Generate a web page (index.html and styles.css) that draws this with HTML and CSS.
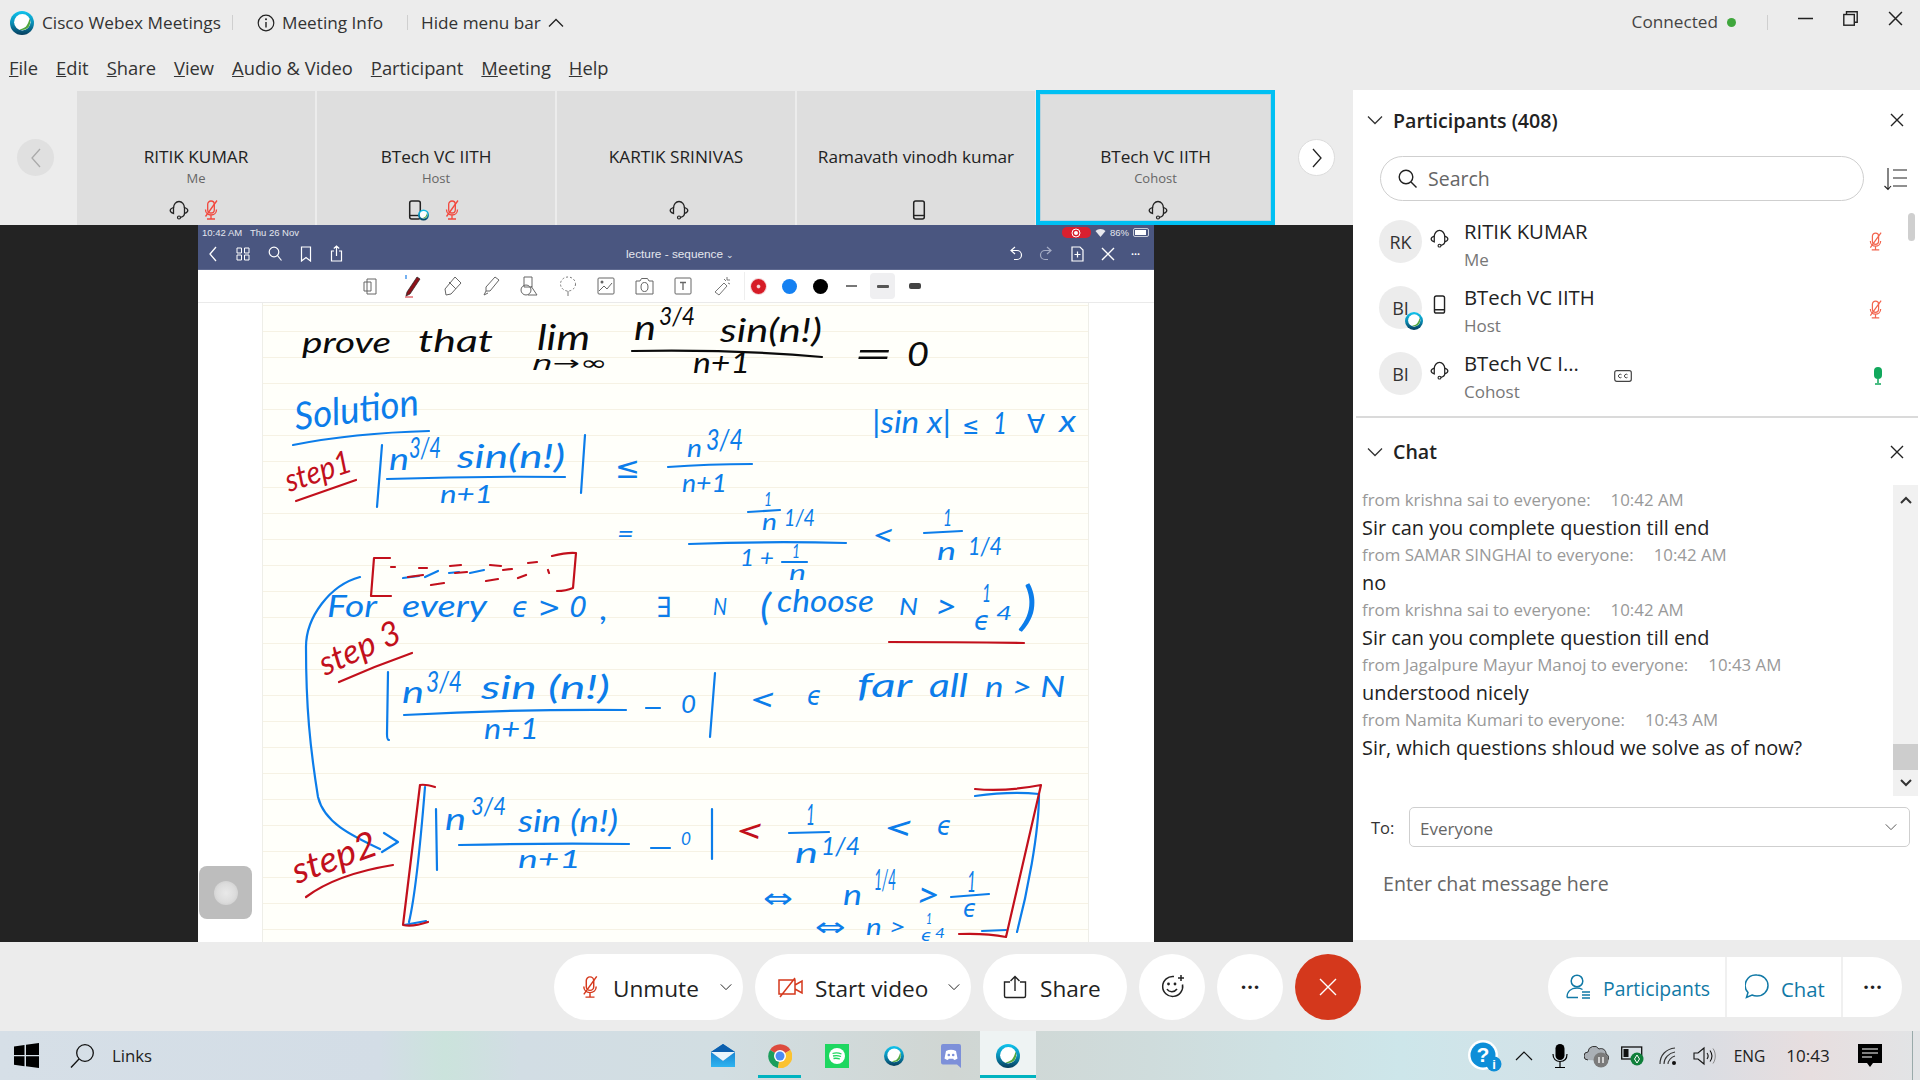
FILE: index.html
```html
<!DOCTYPE html>
<html lang="en">
<head>
<meta charset="utf-8">
<title>Cisco Webex Meetings</title>
<link rel="stylesheet" href="styles.css">
</head>
<body>
<svg class="defs" width="0" height="0" aria-hidden="true">
  <defs>
    <linearGradient id="wxg" x1="0" y1="0" x2="0" y2="1"><stop offset="0" stop-color="#10c4ee"/><stop offset=".5" stop-color="#0a8fb6"/><stop offset="1" stop-color="#053c5c"/></linearGradient>
    <linearGradient id="mailg" x1="0" y1="0" x2="0" y2="1"><stop offset="0" stop-color="#0f6fc4"/><stop offset="1" stop-color="#2fb4f0"/></linearGradient>
    <symbol id="wx" viewBox="0 0 24 24">
      <circle cx="12" cy="12" r="12" fill="url(#wxg)"/>
      <circle cx="12.300" cy="11.300" r="8.200" fill="#fff"/>
      <path d="M19.500 7.500c1.400 3.500.6 7.400-1.900 9.600-2.300 2.100-5.500 2.500-8.200 1.300 3.900-.6 6.200-1.800 7.600-4.300 1-1.700 1.900-3.900 2.500-6.600z" fill="#52a73f"/>
    </symbol>
    <symbol id="headset" viewBox="0 0 20 20">
      <path d="M4.500 8a5.500 6.500 0 0 1 11 0M15.500 13.500c0 2-1.500 3.200-4 3.800" fill="none" stroke="currentColor" stroke-width="1.300"/>
      <path d="M4.500 7.500v6c-2-.7-3.300-1.800-3.300-3s1.300-2.300 3.300-3zM15.500 7.500v6c2-.7 3.300-1.800 3.300-3s-1.300-2.300-3.300-3z" fill="none" stroke="currentColor" stroke-width="1.300"/>
      <circle cx="10" cy="17.500" r="1.500" fill="none" stroke="currentColor" stroke-width="1.200"/>
    </symbol>
    <symbol id="phone" viewBox="0 0 14 20">
      <rect x="1.700" y="1" width="10.600" height="18" rx="2" fill="none" stroke="currentColor" stroke-width="1.500"/>
      <path d="M2 15.500h10" stroke="currentColor" stroke-width="1.400"/>
    </symbol>
    <symbol id="micoff" viewBox="0 0 16 20">
      <rect x="4.700" y="1" width="6.600" height="12" rx="3.300" fill="none" stroke="currentColor" stroke-width="1.300"/>
      <path d="M2.500 9.500c0 3.500 2.500 5.500 5.500 5.500s5.500-2 5.500-5.500M8 15v3.500M4 19h8M14 .5L2.500 16.500" fill="none" stroke="currentColor" stroke-width="1.300"/>
    </symbol>
    <symbol id="x" viewBox="0 0 14 14"><path d="M1 1l12 12M13 1L1 13" fill="none" stroke="currentColor" stroke-width="1.400"/></symbol>
    <symbol id="chev" viewBox="0 0 16 10"><path d="M1 1.500l7 7 7-7" fill="none" stroke="currentColor" stroke-width="1.300"/></symbol>
  </defs>
</svg>

<div class="app">
  <header class="titlebar">
    <svg class="logo" width="24" height="24"><use href="#wx"/></svg>
    <span class="app-name">Cisco Webex Meetings</span>
    <span class="tsep s1"></span>
    <svg class="info" width="18" height="18" viewBox="0 0 18 18"><circle cx="9" cy="9" r="7.800" fill="none" stroke="#222" stroke-width="1.200"/><path d="M9 8v5.500" stroke="#222" stroke-width="1.400"/><circle cx="9" cy="5.300" r="1" fill="#222"/></svg>
    <span class="tb-text">Meeting Info</span>
    <span class="tsep s2"></span>
    <span class="tb-text">Hide menu bar</span>
    <svg class="hide-chev" width="16" height="10" viewBox="0 0 16 10"><path d="M1 8.500l7-7 7 7" fill="none" stroke="#222" stroke-width="1.300"/></svg>
    <div class="winctl">
      <span class="connected">Connected</span>
      <span class="cdot"></span>
      <span class="tsep s3"></span>
      <svg class="wbtn" width="15" height="15" viewBox="0 0 15 15"><path d="M0 7.500h15" stroke="#222" stroke-width="1.500"/></svg>
      <svg class="wbtn" width="15" height="15" viewBox="0 0 15 15"><rect x=".8" y="3.500" width="10.500" height="10.700" fill="none" stroke="#222" stroke-width="1.400"/><path d="M3.500 3.500V.8h10.700v10.500h-2.900" fill="none" stroke="#222" stroke-width="1.400"/></svg>
      <svg class="wbtn" width="15" height="15"><use href="#x" class="ink-dark"/></svg>
    </div>
  </header>

  <nav class="menubar">
    <span><u>F</u>ile</span><span><u>E</u>dit</span><span><u>S</u>hare</span><span><u>V</u>iew</span><span><u>A</u>udio &amp; Video</span><span><u>P</u>articipant</span><span><u>M</u>eeting</span><span><u>H</u>elp</span>
  </nav>

  <div class="workspace">
    <main class="stage">
      <div class="strip">
        <button class="nav prev"><svg width="12" height="20" viewBox="0 0 12 20"><path d="M10 1L2 10l8 9" fill="none" stroke="#aaa" stroke-width="1.300"/></svg></button>
        <div class="tiles">
          <div class="tile">
            <div class="t-name">RITIK KUMAR</div><div class="t-role">Me</div>
            <div class="t-icons two"><svg class="ic-dark" width="20" height="20"><use href="#headset"/></svg><svg class="ic-red" width="16" height="20"><use href="#micoff"/></svg></div>
          </div>
          <div class="tile">
            <div class="t-name">BTech VC IITH</div><div class="t-role">Host</div>
            <div class="t-icons two"><span class="dev"><svg class="ic-dark" width="14" height="20"><use href="#phone"/></svg><svg class="dev-logo" width="11" height="12"><use href="#wx"/></svg></span><svg class="ic-red" width="16" height="20"><use href="#micoff"/></svg></div>
          </div>
          <div class="tile">
            <div class="t-name">KARTIK SRINIVAS</div><div class="t-role"></div>
            <div class="t-icons one"><svg class="ic-dark" width="20" height="20"><use href="#headset"/></svg></div>
          </div>
          <div class="tile">
            <div class="t-name">Ramavath vinodh kumar</div><div class="t-role"></div>
            <div class="t-icons one"><svg class="ic-dark" width="14" height="20"><use href="#phone"/></svg></div>
          </div>
          <div class="tile sel">
            <div class="t-name">BTech VC IITH</div><div class="t-role">Cohost</div>
            <div class="t-icons one"><svg class="ic-dark" width="20" height="20"><use href="#headset"/></svg></div>
          </div>
        </div>
        <button class="nav next"><svg width="12" height="20" viewBox="0 0 12 20"><path d="M2 1l8 9-8 9" fill="none" stroke="#222" stroke-width="1.300"/></svg></button>
      </div>

      <div class="share">
        <div class="slide">
          <div class="statusbar">
            <span>10:42 AM&nbsp;&nbsp; Thu 26 Nov</span>
            <div class="status-r">
              <span class="rec"><svg width="10" height="10" viewBox="0 0 10 10"><circle cx="5" cy="5" r="4" fill="none" stroke="#fff"/><circle cx="5" cy="5" r="2" fill="#fff"/></svg></span>
              <svg width="11" height="9" viewBox="0 0 11 9"><path d="M.5 3a7 7 0 0 1 10 0L5.500 9z" fill="#e8e8ee"/></svg>
              <span>86%</span>
              <span class="batt"><span></span></span>
            </div>
          </div>
          <div class="nbbar">
            <div class="nb-left">
              <svg width="10" height="16" viewBox="0 0 10 16"><path d="M8 1L2 8l6 7" fill="none" stroke="#fff" stroke-width="1.300"/></svg>
              <svg width="14" height="14" viewBox="0 0 14 14"><path d="M1 1h4.500v5H1zM8.500 1H13v5H8.500zM1 8h4.500v5H1zM8.500 8H13v5H8.500z" fill="none" stroke="#fff"/></svg>
              <svg width="14" height="15" viewBox="0 0 14 15"><circle cx="6" cy="6" r="4.800" fill="none" stroke="#fff" stroke-width="1.200"/><path d="M9.500 9.500l4 5" stroke="#fff" stroke-width="1.200"/></svg>
              <svg width="12" height="16" viewBox="0 0 12 16"><path d="M1.500 1h9v14L6 11.500 1.500 15z" fill="none" stroke="#fff" stroke-width="1.200"/></svg>
              <svg width="13" height="17" viewBox="0 0 13 17"><path d="M4 6H1.500v10h10V6H9M6.500 11V1M3.800 3.500L6.500 1l2.700 2.500" fill="none" stroke="#fff" stroke-width="1.200"/></svg>
            </div>
            <div class="nb-title">lecture - sequence <span class="nb-caret">⌄</span></div>
            <div class="nb-right">
              <svg width="15" height="15" viewBox="0 0 15 15"><path d="M7 1L3 4.500 7 8M3 4.500h6a4.500 4.500 0 0 1 0 9H6" fill="none" stroke="#fff" stroke-width="1.200"/></svg>
              <svg width="15" height="15" viewBox="0 0 15 15"><path d="M8 1l4 3.500L8 8M12 4.500H6a4.500 4.500 0 0 0 0 9h3" fill="none" stroke="#a5acc4" stroke-width="1.200"/></svg>
              <svg width="15" height="16" viewBox="0 0 15 16"><path d="M2 1h8l3 3v11H2zM7.500 5.500v6M4.500 8.500h6" fill="none" stroke="#fff" stroke-width="1.200"/></svg>
              <svg width="14" height="14"><use href="#x" class="ink-white"/></svg>
              <span class="nb-dots">•••</span>
            </div>
          </div>
          <div class="tools">
            <svg class="tool t1" width="16" height="17" viewBox="0 0 16 17"><path d="M4 1h9v15H4zM1 4h7v9H1z" fill="none" stroke="#666"/></svg>
            <svg class="tool t2" width="20" height="24" viewBox="0 0 20 24"><path d="M14 3l3 2L7 20l-4 2 1-4z" fill="#8d1119" stroke="#222" stroke-width=".7"/><path d="M2 23h8" stroke="#d6242f"/><path d="M3 1v4" stroke="#1b7fe8" stroke-width="1.200"/></svg>
            <svg class="tool t3" width="20" height="22" viewBox="0 0 20 22"><path d="M12 2l6 6L8 19l-5 1-1-6zM6 7l7 7" fill="none" stroke="#666"/></svg>
            <svg class="tool t4" width="20" height="22" viewBox="0 0 20 22"><path d="M14 2l4 3-9 11H5v-4zM5 16l-2 4 4-2" fill="none" stroke="#666"/></svg>
            <svg class="tool t5" width="20" height="22" viewBox="0 0 20 22"><path d="M5 2h8v10H5z" fill="none" stroke="#666"/><circle cx="7" cy="15" r="5" fill="none" stroke="#666"/><path d="M12 11l6 9h-9" fill="none" stroke="#666"/></svg>
            <svg class="tool t6" width="18" height="22" viewBox="0 0 18 22"><ellipse cx="9" cy="9" rx="7.500" ry="7" fill="none" stroke="#777" stroke-dasharray="2 2"/><path d="M9 16v5" stroke="#777"/></svg>
            <svg class="tool t7" width="18" height="18" viewBox="0 0 18 18"><rect x="1" y="1" width="16" height="16" rx="1" fill="none" stroke="#666"/><path d="M2 14l5-5 3 3 5-6" fill="none" stroke="#666"/><circle cx="5" cy="5" r="1.500" fill="#666"/></svg>
            <svg class="tool t8" width="19" height="18" viewBox="0 0 19 18"><path d="M1 4h4l1.500-2.500h6L14 4h4v13H1z" fill="none" stroke="#666"/><ellipse cx="9.500" cy="10" rx="3.500" ry="4.500" fill="none" stroke="#666"/></svg>
            <svg class="tool t9" width="18" height="18" viewBox="0 0 18 18"><rect x="1" y="1" width="16" height="16" rx="1" fill="none" stroke="#666"/><path d="M6 5.500h6M9 5.500v7.500" stroke="#666" stroke-width="1.300"/></svg>
            <svg class="tool t10" width="20" height="22" viewBox="0 0 20 22"><path d="M12 8l3 3-8 9-4-3zM15 2v3M18 5h-3M12 4l2 2M18 9l-2-1" fill="none" stroke="#777"/></svg>
            <span class="tsplit"></span>
            <span class="pen red"></span><span class="pen blue"></span><span class="pen black"></span>
            <span class="wt w1"></span><span class="wt-sel"><span class="wt w2"></span></span><span class="wt w3"></span>
          </div>
          <div class="paper"></div>
          <svg class="ink" width="956" height="639" viewBox="198 303 956 639">
            <!-- black -->
            <g class="hw k">
              <text x="302" y="353" font-size="28" textLength="89" lengthAdjust="spacingAndGlyphs">prove</text>
              <text x="418" y="352" font-size="30" textLength="75" lengthAdjust="spacingAndGlyphs">that</text>
              <text x="537" y="350" font-size="34" textLength="53" lengthAdjust="spacingAndGlyphs">lim</text>
              <text class="sym" x="532" y="370" font-size="20" textLength="75" lengthAdjust="spacingAndGlyphs">n→∞</text>
              <text x="634" y="340" font-size="34" textLength="22" lengthAdjust="spacingAndGlyphs">n</text>
              <text x="659" y="325" font-size="26" textLength="36" lengthAdjust="spacingAndGlyphs">3/4</text>
              <text x="720" y="342" font-size="32" textLength="102" lengthAdjust="spacingAndGlyphs">sin(n!)</text>
              <text x="693" y="373" font-size="28" textLength="57" lengthAdjust="spacingAndGlyphs">n+1</text>
              <text x="854" y="368" font-size="38" textLength="39" lengthAdjust="spacingAndGlyphs">=</text>
              <text x="907" y="366" font-size="32" textLength="22" lengthAdjust="spacingAndGlyphs">0</text>
            </g>
            <path class="st k" d="M632 351q100-2 190 6"/>
            <!-- blue writing -->
            <g class="hw b">
              <text x="296" y="430" font-size="38" textLength="125" lengthAdjust="spacingAndGlyphs" transform="rotate(-7 296 430)">Solution</text>
              <text x="389" y="470" font-size="30" textLength="20" lengthAdjust="spacingAndGlyphs">n</text>
              <text x="409" y="458" font-size="28" textLength="32" lengthAdjust="spacingAndGlyphs">3/4</text>
              <text x="457" y="468" font-size="32" textLength="108" lengthAdjust="spacingAndGlyphs">sin(n!)</text>
              <text x="440" y="503" font-size="26" textLength="53" lengthAdjust="spacingAndGlyphs">n+1</text>
              <text class="sym" x="615" y="478" font-size="30" textLength="25" lengthAdjust="spacingAndGlyphs">≤</text>
              <text x="687" y="457" font-size="26" textLength="15" lengthAdjust="spacingAndGlyphs">n</text>
              <text x="706" y="450" font-size="28" textLength="37" lengthAdjust="spacingAndGlyphs">3/4</text>
              <text x="682" y="492" font-size="26" textLength="45" lengthAdjust="spacingAndGlyphs">n+1</text>
              <text x="872" y="433" font-size="30" textLength="79" lengthAdjust="spacingAndGlyphs">|sin x|</text>
              <text class="sym" x="962" y="434" font-size="24" textLength="17" lengthAdjust="spacingAndGlyphs">≤</text>
              <text x="993" y="434" font-size="30" textLength="14" lengthAdjust="spacingAndGlyphs">1</text>
              <text class="sym" x="1027" y="433" font-size="26" textLength="18" lengthAdjust="spacingAndGlyphs">∀</text>
              <text x="1059" y="432" font-size="30" textLength="17" lengthAdjust="spacingAndGlyphs">x</text>
              <text x="764" y="506" font-size="20" textLength="8" lengthAdjust="spacingAndGlyphs">1</text>
              <text x="762" y="530" font-size="24" textLength="15" lengthAdjust="spacingAndGlyphs">n</text>
              <text x="784" y="526" font-size="24" textLength="31" lengthAdjust="spacingAndGlyphs">1/4</text>
              <text x="617" y="543" font-size="26" textLength="17" lengthAdjust="spacingAndGlyphs">=</text>
              <text x="740" y="566" font-size="24" textLength="34" lengthAdjust="spacingAndGlyphs">1 +</text>
              <text x="792" y="558" font-size="20" textLength="8" lengthAdjust="spacingAndGlyphs">1</text>
              <text x="789" y="580" font-size="22" textLength="17" lengthAdjust="spacingAndGlyphs">n</text>
              <text x="872" y="546" font-size="30" textLength="23" lengthAdjust="spacingAndGlyphs">&lt;</text>
              <text x="943" y="526" font-size="24" textLength="9" lengthAdjust="spacingAndGlyphs">1</text>
              <text x="937" y="560" font-size="26" textLength="19" lengthAdjust="spacingAndGlyphs">n</text>
              <text x="968" y="555" font-size="26" textLength="34" lengthAdjust="spacingAndGlyphs">1/4</text>

              <text x="327" y="617" font-size="30" textLength="50" lengthAdjust="spacingAndGlyphs">For</text>
              <text x="402" y="617" font-size="30" textLength="85" lengthAdjust="spacingAndGlyphs">every</text>
              <text class="sym" x="512" y="617" font-size="28" textLength="75" lengthAdjust="spacingAndGlyphs">ϵ &gt; 0</text>
              <text x="600" y="620" font-size="30" textLength="8" lengthAdjust="spacingAndGlyphs">,</text>
              <text class="sym" x="656" y="617" font-size="28" textLength="15" lengthAdjust="spacingAndGlyphs">∃</text>
              <text x="713" y="615" font-size="24" textLength="14" lengthAdjust="spacingAndGlyphs">N</text>
              <text x="760" y="620" font-size="36" textLength="11" lengthAdjust="spacingAndGlyphs">(</text>
              <text x="777" y="612" font-size="30" textLength="97" lengthAdjust="spacingAndGlyphs">choose</text>
              <text x="899" y="615" font-size="24" textLength="19" lengthAdjust="spacingAndGlyphs">N</text>
              <text x="935" y="618" font-size="32" textLength="22" lengthAdjust="spacingAndGlyphs">&gt;</text>
              <text x="982" y="602" font-size="26" textLength="9" lengthAdjust="spacingAndGlyphs">1</text>
              <text class="sym" x="974" y="630" font-size="26" textLength="16" lengthAdjust="spacingAndGlyphs">ϵ</text>
              <text x="996" y="620" font-size="20" textLength="16" lengthAdjust="spacingAndGlyphs">4</text>
              <text x="1020" y="624" font-size="52" textLength="17" lengthAdjust="spacingAndGlyphs">)</text>

              <text x="402" y="703" font-size="30" textLength="22" lengthAdjust="spacingAndGlyphs">n</text>
              <text x="426" y="692" font-size="28" textLength="36" lengthAdjust="spacingAndGlyphs">3/4</text>
              <text x="481" y="699" font-size="32" textLength="129" lengthAdjust="spacingAndGlyphs">sin (n!)</text>
              <text x="484" y="739" font-size="28" textLength="55" lengthAdjust="spacingAndGlyphs">n+1</text>
              <text x="681" y="713" font-size="26" textLength="15" lengthAdjust="spacingAndGlyphs">0</text>
              <text x="749" y="711" font-size="32" textLength="28" lengthAdjust="spacingAndGlyphs">&lt;</text>
              <text class="sym" x="807" y="705" font-size="26" textLength="15" lengthAdjust="spacingAndGlyphs">ϵ</text>
              <text x="857" y="697" font-size="32" textLength="55" lengthAdjust="spacingAndGlyphs">far</text>
              <text x="929" y="697" font-size="32" textLength="39" lengthAdjust="spacingAndGlyphs">all</text>
              <text x="985" y="697" font-size="28" textLength="80" lengthAdjust="spacingAndGlyphs">n &gt; N</text>

              <text x="445" y="830" font-size="30" textLength="21" lengthAdjust="spacingAndGlyphs">n</text>
              <text x="471" y="815" font-size="26" textLength="35" lengthAdjust="spacingAndGlyphs">3/4</text>
              <text x="518" y="832" font-size="30" textLength="100" lengthAdjust="spacingAndGlyphs">sin (n!)</text>
              <text x="518" y="868" font-size="26" textLength="63" lengthAdjust="spacingAndGlyphs">n+1</text>
              <text x="681" y="845" font-size="18" textLength="10" lengthAdjust="spacingAndGlyphs">0</text>
              <text x="806" y="825" font-size="28" textLength="9" lengthAdjust="spacingAndGlyphs">1</text>
              <text x="795" y="863" font-size="28" textLength="23" lengthAdjust="spacingAndGlyphs">n</text>
              <text x="821" y="855" font-size="26" textLength="39" lengthAdjust="spacingAndGlyphs">1/4</text>
              <text x="883" y="840" font-size="34" textLength="32" lengthAdjust="spacingAndGlyphs">&lt;</text>
              <text class="sym" x="937" y="835" font-size="26" textLength="15" lengthAdjust="spacingAndGlyphs">ϵ</text>
              <text class="sym" x="763" y="908" font-size="28" textLength="30" lengthAdjust="spacingAndGlyphs">⇔</text>
              <text x="843" y="905" font-size="28" textLength="19" lengthAdjust="spacingAndGlyphs">n</text>
              <text x="874" y="890" font-size="28" textLength="22" lengthAdjust="spacingAndGlyphs">1/4</text>
              <text x="916" y="907" font-size="34" textLength="24" lengthAdjust="spacingAndGlyphs">&gt;</text>
              <text x="967" y="892" font-size="28" textLength="9" lengthAdjust="spacingAndGlyphs">1</text>
              <text class="sym" x="963" y="917" font-size="24" textLength="14" lengthAdjust="spacingAndGlyphs">ϵ</text>
              <text class="sym" x="815" y="936" font-size="26" textLength="31" lengthAdjust="spacingAndGlyphs">⇔</text>
              <text x="866" y="935" font-size="24" textLength="40" lengthAdjust="spacingAndGlyphs">n &gt;</text>
              <text x="926" y="924" font-size="16" textLength="6" lengthAdjust="spacingAndGlyphs">1</text>
              <text class="sym" x="921" y="941" font-size="16" textLength="11" lengthAdjust="spacingAndGlyphs">ϵ</text>
              <text x="935" y="938" font-size="14" textLength="10" lengthAdjust="spacingAndGlyphs">4</text>
            </g>
            <g class="st b">
              <path d="M293 445q60-12 136-14"/>
              <path d="M382 445l-5 62M585 435l-4 58"/>
              <path d="M387 479q90-3 178-2"/>
              <path d="M668 467q40-3 84-3"/>
              <path d="M748 512l32-2M689 544q80-3 157-1M782 562h25M924 533l38-2"/>
              <path d="M360 577c-30 8-54 40-54 70 0 60 4 100 12 150 6 25 32 38 62 52M384 833l14 9-16 10"/>
              <path d="M388 672l-1 62q0 6 2 6M404 715q110-6 222-5M646 708h14M715 673l-5 64"/>
              <path d="M436 809l1 61M459 845q85-2 170-1M651 848h19M712 809v50M789 833l40-1M951 897l38-3"/>
              <path d="M425 787c-4 50-10 110-16 135M404 925l22-4M975 796q36-5 64-2c0 40-12 100-22 138M1006 930l-24 1"/>
              <path d="M403 578l16-2M425 577l13-6M449 573l10-1M470 573l14-3"/>
            </g>
            <!-- red -->
            <g class="hw r">
              <text x="289" y="492" font-size="32" textLength="68" lengthAdjust="spacingAndGlyphs" transform="rotate(-18 289 492)">step1</text>
              <text x="325" y="676" font-size="34" textLength="86" lengthAdjust="spacingAndGlyphs" transform="rotate(-24 325 676)">step 3</text>
              <text x="297" y="884" font-size="36" textLength="88" lengthAdjust="spacingAndGlyphs" transform="rotate(-20 297 884)">step2</text>
              <text x="735" y="843" font-size="34" textLength="30" lengthAdjust="spacingAndGlyphs">&lt;</text>
            </g>
            <g class="st r">
              <path d="M296 501l60-21"/>
              <path d="M339 682q36-16 73-29"/>
              <path d="M306 897c20-15 50-26 87-32"/>
              <path d="M889 642q70 0 135 1"/>
              <path d="M390 558h-16l-3 38h20M552 556q16-4 24-3l-3 35q-7 3-16 3"/>
              <path d="M435 787q-10-3-15-2l-17 140q10 2 25-3"/>
              <path d="M975 789q30 3 66-4l-35 152q-20-4-47-3"/>
              <path d="M391 567h4M408 577l15-2M419 568h8M431 585l13-2M450 566l11-1M455 573l12-1M486 581l12-2M490 565l11 1M503 570l9-1M518 578l8-3M528 563l9-1M548 570l1 3"/>
            </g>
          </svg>
          <div class="floater"><span></span></div>
        </div>
      </div>
    </main>

    <aside class="side">
      <section class="people">
        <div class="p-head">
          <svg class="coll" width="16" height="10"><use href="#chev"/></svg>
          <h2>Participants (408)</h2>
          <svg class="close" width="14" height="14"><use href="#x"/></svg>
        </div>
        <div class="search-row">
          <div class="search">
            <svg width="19" height="19" viewBox="0 0 19 19"><circle cx="8" cy="8" r="6.800" fill="none" stroke="#222" stroke-width="1.400"/><path d="M13 13l5.500 5.500" stroke="#222" stroke-width="1.400"/></svg>
            <span>Search</span>
          </div>
          <svg class="sort" width="25" height="24" viewBox="0 0 25 24"><path d="M5 1v21M1.500 19L5 22.500 8 19M10 3h14M10 11h14M10 19h14" fill="none" stroke="#222" stroke-width="1.100"/></svg>
        </div>
        <div class="row">
          <div class="avatar">RK</div>
          <svg class="r-ic" width="19" height="19"><use href="#headset"/></svg>
          <div class="r-txt"><div class="r-name">RITIK KUMAR</div><div class="r-role">Me</div></div>
          <svg class="r-mic" width="15" height="19"><use href="#micoff"/></svg>
        </div>
        <div class="row">
          <div class="avatar">BI<svg class="av-logo" width="18" height="18"><use href="#wx"/></svg></div>
          <svg class="r-ic" width="19" height="19" viewBox="-3 0 20 20"><use href="#phone" width="14" height="20"/></svg>
          <div class="r-txt"><div class="r-name">BTech VC IITH</div><div class="r-role">Host</div></div>
          <svg class="r-mic low" width="15" height="19"><use href="#micoff"/></svg>
        </div>
        <div class="row">
          <div class="avatar">BI</div>
          <svg class="r-ic" width="19" height="19"><use href="#headset"/></svg>
          <div class="r-txt"><div class="r-name">BTech VC I...</div><div class="r-role">Cohost</div></div>
          <svg class="cc" width="18" height="12" viewBox="0 0 18 12"><rect x=".7" y=".7" width="16.600" height="10.600" rx="2" fill="none" stroke="#444" stroke-width="1.200"/><path d="M7.500 4.700a1.800 1.800 0 1 0 0 2.600M13.500 4.700a1.800 1.800 0 1 0 0 2.600" fill="none" stroke="#444"/></svg>
          <svg class="r-mic low" width="15" height="19" viewBox="0 0 15 19"><rect x="6" y="1" width="8" height="12" rx="4" fill="#11a85c"/><path d="M10 13v4M7 18h6" stroke="#11a85c" stroke-width="1.500"/></svg>
        </div>
        <span class="p-scroll"></span>
      </section>
      <div class="side-div"></div>
      <section class="chat">
        <div class="c-head">
          <svg class="coll" width="16" height="10"><use href="#chev"/></svg>
          <h2>Chat</h2>
          <svg class="close" width="14" height="14"><use href="#x"/></svg>
        </div>
        <div class="c-log">
          <div class="msgs">
            <div class="meta"><span>from krishna sai to everyone:</span><span>10:42 AM</span></div>
            <div class="body">Sir can you complete question till end</div>
            <div class="meta"><span>from SAMAR SINGHAI to everyone:</span><span>10:42 AM</span></div>
            <div class="body">no</div>
            <div class="meta"><span>from krishna sai to everyone:</span><span>10:42 AM</span></div>
            <div class="body">Sir can you complete question till end</div>
            <div class="meta"><span>from Jagalpure Mayur Manoj to everyone:</span><span>10:43 AM</span></div>
            <div class="body">understood nicely</div>
            <div class="meta"><span>from Namita Kumari to everyone:</span><span>10:43 AM</span></div>
            <div class="body">Sir, which questions shloud we solve as of now?</div>
          </div>
          <div class="track">
            <svg class="t-up" width="12" height="8" viewBox="0 0 12 8"><path d="M1 7l5-5 5 5" fill="none" stroke="#333" stroke-width="2"/></svg>
            <span class="thumb"></span>
            <svg class="t-dn" width="12" height="8" viewBox="0 0 12 8"><path d="M1 1l5 5 5-5" fill="none" stroke="#333" stroke-width="2"/></svg>
          </div>
        </div>
        <div class="to">
          <span class="to-l">To:</span>
          <div class="select"><span>Everyone</span><svg width="12" height="8"><use href="#chev" width="12" height="8"/></svg></div>
        </div>
        <div class="enter">Enter chat message here</div>
      </section>
    </aside>
  </div>

  <div class="controls">
    <div class="pill p-unmute">
      <svg class="ic-red2" width="18" height="24"><use href="#micoff"/></svg>
      <span>Unmute</span>
      <svg class="pchev" width="12" height="8"><use href="#chev" width="12" height="8"/></svg>
    </div>
    <div class="pill p-video">
      <svg width="25" height="22" viewBox="0 0 25 22"><path d="M1 4h16v14H1zM17 9l7-4v12l-7-4M17 2L2 21" fill="none" stroke="#d5391d" stroke-width="1.500"/></svg>
      <span>Start video</span>
      <svg class="pchev" width="12" height="8"><use href="#chev" width="12" height="8"/></svg>
    </div>
    <div class="pill p-share">
      <svg width="24" height="24" viewBox="0 0 24 24"><path d="M7 7H1.500v14a1.500 1.500 0 0 0 1.500 1.500h18a1.500 1.500 0 0 0 1.500-1.500V7H17M12 16V1.500M7.500 6L12 1.500 16.500 6" fill="none" stroke="#222" stroke-width="1.400"/></svg>
      <span>Share</span>
    </div>
    <div class="round"><svg width="25" height="25" viewBox="0 0 25 25"><path d="M14 2.500a10 10 0 1 0 8.500 8" fill="none" stroke="#222" stroke-width="1.500"/><circle cx="8.500" cy="10" r="1.400" fill="#222"/><circle cx="15" cy="10" r="1.400" fill="#222"/><path d="M7 15c2 3.500 7.500 3.500 10 0M21 1v6M18 4h6" fill="none" stroke="#222" stroke-width="1.500"/></svg></div>
    <div class="round dots">···</div>
    <div class="round end"><svg width="20" height="20" viewBox="0 0 20 20"><path d="M2 2l16 16M18 2L2 18" stroke="#fff" stroke-width="1.400"/></svg></div>
    <div class="pill-r">
      <div class="seg s-part">
        <svg width="25" height="26" viewBox="0 0 25 26"><circle cx="11" cy="7" r="5.800" fill="none" stroke="#1179a6" stroke-width="1.500"/><path d="M1 23.500c0-6 4-9.500 10-9.500 2.500 0 4 .5 5.500 1.500M1 23.500h11M16 18h8M16 21h8M16 24h8" fill="none" stroke="#1179a6" stroke-width="1.400"/></svg>
        <span>Participants</span>
      </div>
      <div class="seg s-chat">
        <svg width="24" height="25" viewBox="0 0 24 25"><path d="M12 1a11 10.500 0 0 1 0 21c-2 0-3.500-.3-5-1l-5.500 2.500 1.500-5A10.500 10.500 0 0 1 12 1z" fill="none" stroke="#1179a6" stroke-width="1.500"/></svg>
        <span>Chat</span>
      </div>
      <div class="seg s-more">···</div>
    </div>
  </div>

  <footer class="taskbar">
    <svg class="win" width="25" height="25" viewBox="0 0 25 25"><path d="M0 3.500l10.500-1.500v10H0zM12 1.800L25 0v12H12zM0 13.200h10.500v10L0 21.700zM12 13.200h13V25l-13-1.800z" fill="#000"/></svg>
    <svg class="tsearch" width="25" height="25" viewBox="0 0 25 25"><circle cx="15" cy="10" r="8.300" fill="none" stroke="#111" stroke-width="1.300"/><path d="M9 16L1 24.500" stroke="#111" stroke-width="1.300"/></svg>
    <span class="links">Links</span>
    <div class="apps">
      <div class="app-cell"><svg width="24" height="23" viewBox="0 0 24 23"><path d="M12 0L0 8v15h24V8z" fill="url(#mailg)"/><path d="M12 0L0 8l12 9 12-9z" fill="#0b5fae"/><path d="M0 8h24L12 17z" fill="#e9f5fc"/></svg></div>
      <div class="app-cell open"><svg width="24" height="24" viewBox="0 0 24 24"><path d="M12 12L2 6a12 12 0 0 1 20.500 0z" fill="#dd4b3e"/><path d="M12 12L2 6a12 12 0 0 0 8 18z" fill="#1b9e5c"/><path d="M12 12l10.500-6A12 12 0 0 1 10 24z" fill="#fbc230"/><circle cx="12" cy="12" r="6" fill="#fff"/><circle cx="12" cy="12" r="4.500" fill="#4c8bf5"/></svg></div>
      <div class="app-cell"><svg width="24" height="24" viewBox="0 0 24 24"><rect width="24" height="24" fill="#1ed760"/><circle cx="12" cy="12" r="8" fill="#fff"/><path d="M7.500 9.500q4.500-1.500 9 .5M8 12q4-1 8 .5M8.500 14.500q3-.7 6.500.5" fill="none" stroke="#1ed760" stroke-width="1.300"/></svg></div>
      <div class="app-cell"><svg width="20" height="22"><use href="#wx"/></svg></div>
      <div class="app-cell"><svg width="20" height="24" viewBox="0 0 20 24"><path d="M2 0h16a2 2 0 0 1 2 2v22l-4-3.500H2a2 2 0 0 1-2-2V2a2 2 0 0 1 2-2z" fill="#7d90d9"/><path d="M5 7q5-2.500 10 0l1.500 7.500q-1.500 1.200-3.500 1.500l-.7-1.200H7.700L7 16q-2-.3-3.500-1.500z" fill="#fff"/><circle cx="7.800" cy="11" r="1.300" fill="#7d90d9"/><circle cx="12.200" cy="11" r="1.300" fill="#7d90d9"/></svg></div>
      <div class="app-cell active"><svg width="24" height="26"><use href="#wx"/></svg></div>
    </div>
    <div class="tray">
      <svg class="tc-q" width="34" height="32" viewBox="0 0 34 32"><circle cx="15" cy="15" r="15" fill="#fff"/><circle cx="15" cy="15" r="12.500" fill="#0d8ed8"/><text x="15" y="22" class="q-t" text-anchor="middle">?</text><circle cx="26" cy="24" r="7.500" fill="#0d8ed8"/><text x="26" y="28.500" class="i-t" text-anchor="middle">i</text></svg>
      <div class="tc"><svg width="18" height="10" viewBox="0 0 18 10"><path d="M1 9l8-8 8 8" fill="none" stroke="#111" stroke-width="1.200"/></svg></div>
      <div class="tc"><svg width="16" height="24" viewBox="0 0 16 24"><rect x="3.500" y="0" width="9" height="16" rx="4.500" fill="#000"/><path d="M1 10c0 5 3 7.500 7 7.500s7-2.500 7-7.500M8 17.500V23M3 23.500h10" fill="none" stroke="#000" stroke-width="1.200"/></svg></div>
      <div class="tc"><svg width="25" height="24" viewBox="0 0 25 24"><path d="M4 16a4 4 0 0 1 0-8 6 6 0 0 1 11-3 5 5 0 0 1 7 5 4 4 0 0 1 1 7" fill="#aab0b6" stroke="#333" stroke-width="1"/><circle cx="17" cy="16" r="7.500" fill="#7b7b7b"/><path d="M15 13v6M19 13v6" stroke="#fff" stroke-width="1.300"/></svg></div>
      <div class="tc"><svg width="23" height="20" viewBox="0 0 23 20"><rect x=".7" y="1" width="20" height="12" fill="none" stroke="#111" stroke-width="1.300"/><rect x="2.500" y="3" width="5" height="8" fill="#111"/><circle cx="16" cy="13" r="6.500" fill="#0f7f3a"/><path d="M16 9l2.500 4L16 17l-2.500-4z" fill="none" stroke="#fff"/></svg></div>
      <div class="tc"><svg width="19" height="18" viewBox="0 0 19 18"><path d="M1 17c0-9 6-15 15-16M5 17c0-6 5-11 11-12M9 17c0-3 3-7 7-8" fill="none" stroke="#333" stroke-width="1.100"/><circle cx="15" cy="16" r="2" fill="#111"/></svg></div>
      <div class="tc"><svg width="23" height="20" viewBox="0 0 23 20"><path d="M1 7h4l6-5v16l-6-5H1zM14 7c1.500 2 1.500 4 0 6M17 4.500c2.500 3.500 2.500 7.500 0 11" fill="none" stroke="#111" stroke-width="1.100"/><path d="M20 2.500c3 4 3 11 0 15" fill="none" stroke="#888"/></svg></div>
      <div class="tc-eng">ENG</div>
      <div class="tc-clock">10:43</div>
      <div class="tc-note"><svg width="24" height="24" viewBox="0 0 24 24"><path d="M0 0h24v19h-9l-3 4-3-4H0z" fill="#000"/><path d="M4 5h16M4 9h16M4 13h10" stroke="#fff" stroke-width="1.100"/></svg></div>
      <span class="tb-edge"></span>
    </div>
  </footer>
</div>
</body>
</html>
```

FILE: styles.css
```css
* { box-sizing: border-box; }
html, body { margin: 0; padding: 0; }
body { width: 1920px; height: 1080px; overflow: hidden; font-family: "Open Sans", "Noto Sans", sans-serif; color: #222; background: #ececec; }
.defs { position: absolute; }
svg { display: block; flex: none; }
.ink-dark { color: #222; }
.ink-white { color: #fff; }

.app { width: 1920px; height: 1080px; display: flex; flex-direction: column; background: #ececec; }

/* title bar */
.titlebar { height: 45px; display: flex; align-items: center; padding-left: 10px; font-size: 17.200px; }
.logo { margin-right: 8px; }
.app-name { width: 190px; color: #333; white-space: nowrap; }
.tsep { width: 1px; height: 15px; background: #cfcfcf; }
.s1 { margin-right: 24px; }
.s2 { margin: 0 13px 0 24px; }
.s3 { margin: 0 30px 0 31px; }
.info { margin-right: 7px; }
.tb-text { color: #333; white-space: nowrap; }
.hide-chev { margin-left: 7px; }
.winctl { margin-left: auto; display: flex; align-items: center; padding-right: 17px; }
.connected { color: #444; margin-bottom: 2px; }
.cdot { width: 9px; height: 9px; border-radius: 50%; background: #3fa63c; margin-left: 9px; }
.wbtn { margin-right: 30px; margin-bottom: 8px; }
.wbtn:last-child { margin-right: 0; }

/* menu bar */
.menubar { height: 45px; display: flex; align-items: center; gap: 18px; padding-left: 9px; font-size: 18.350px; color: #333; }

/* workspace */
.workspace { height: 852px; display: flex; }
.stage { width: 1353px; display: flex; flex-direction: column; }

.strip { height: 135px; display: flex; align-items: flex-start; }
.nav { width: 37px; height: 37px; margin-top: 49px; border-radius: 50%; display: flex; align-items: center; justify-content: center; padding: 0; }
.prev { margin-left: 17px; background: #e0e0e0; border: 0; }
.next { margin-left: 23px; background: #fff; border: 1px solid #dcdcdc; }
.tiles { display: flex; gap: 2px; margin-left: 23px; }
.tile { width: 238px; height: 134px; margin-top: 1px; padding-top: 54px; background: #dedede; display: flex; flex-direction: column; align-items: center; }
.tile.sel { width: 239px; margin-left: -1px; margin-top: 0; height: 135px; padding-top: 55px; box-shadow: inset 0 0 0 4px #00c0f3, inset 0 0 0 5px #b9d3de; }
.t-name { height: 24px; line-height: 24px; font-size: 17.200px; color: #222; white-space: nowrap; }
.t-role { height: 18px; line-height: 18px; font-size: 13px; color: #666; }
.t-icons { margin-top: 13px; display: flex; align-items: center; gap: 14px; }
.t-icons.one { margin-left: 5px; }
.t-icons.two { margin-left: -4px; }
.ic-dark { color: #222; }
.ic-red { color: #f2473c; }
.ic-red2 { color: #d5391d; }
.dev { position: relative; width: 22px; height: 20px; }
.dev-logo { position: absolute; left: 10px; top: 9px; }

.share { height: 717px; background: #232323; padding-left: 198px; }
.slide { position: relative; width: 956px; height: 717px; background: #fff; overflow: hidden; }
.statusbar { height: 15px; background: #4a5680; display: flex; justify-content: space-between; align-items: flex-start; padding: 2px 5px 0 4px; line-height: 11px; font-family: "Liberation Sans", sans-serif; font-size: 9.500px; color: #e4e6ee; }
.status-r { display: flex; align-items: center; gap: 4px; }
.rec { width: 29px; height: 11px; border-radius: 5px; background: #d8202f; display: flex; align-items: center; justify-content: center; }
.batt { width: 16px; height: 9px; border: 1px solid #c8ccd8; border-radius: 2px; padding: 1px; display: block; }
.batt span { display: block; width: 11px; height: 5px; background: #fff; }
.nbbar { height: 30px; background: #4a5680; display: flex; align-items: center; position: relative; padding: 0 14px 2px 10px; justify-content: space-between; border-bottom: 1px solid #5f6a90; }
.nb-left { display: flex; align-items: center; gap: 18px; }
.nb-right { display: flex; align-items: center; gap: 16px; }
.nb-title { position: absolute; left: 428px; top: 6px; font-family: "Liberation Sans", sans-serif; font-size: 11.800px; line-height: 16px; color: #e4e6ee; white-space: nowrap; }
.nb-caret { font-size: 9px; }
.nb-dots { color: #fff; font-size: 8px; letter-spacing: 0; }

.tools { height: 33px; background: #fff; border-bottom: 1px solid #eaeaea; display: flex; align-items: center; padding-left: 165px; position: relative; }
.tool { margin-right: 19px; }
.t1 { margin-right: 24px; }
.t2 { margin-right: 20px; }
.t3, .t4 { margin-right: 18px; }
.t5, .t6, .t9 { margin-right: 20px; }
.t7 { margin-right: 19.500px; }
.t8 { margin-right: 20.500px; }
.t10 { margin-right: 12px; }
.tsplit { width: 1px; height: 28px; background: #eee; margin-right: 6px; }
.pen { width: 15px; height: 15px; border-radius: 50%; margin-right: 16px; }
.pen.red { background: radial-gradient(circle, #f6d7da 0, #f6d7da 12%, #d61b26 22%); box-shadow: 0 0 0 1px #f2d6d8; }
.pen.blue { background: #1581f2; }
.pen.black { background: #000; margin-right: 18px; }
.wt { display: block; background: #777; }
.w1 { width: 11px; height: 1.500px; margin-right: 13px; }
.wt-sel { width: 25px; height: 26px; background: #efeff1; border-radius: 4px; display: flex; align-items: center; justify-content: center; margin-right: 13.500px; }
.w2 { width: 12px; height: 3px; background: #555; border-radius: 1px; }
.w3 { width: 12px; height: 6px; background: #444; border-radius: 2px; }

.paper { height: 639px; margin: 0 65px 0 64px; background-color: #fffffa; background-image: repeating-linear-gradient(to bottom, transparent 0, transparent 2px, #f6f2e4 2px, #f6f2e4 3px, transparent 3px, transparent 26px); border-left: 1px solid #eeeee8; border-right: 1px solid #eeeee8; }
.ink { position: absolute; left: 0; top: 78px; }
.hw text { font-family: "Lato", sans-serif; font-style: italic; font-weight: 400; }
.hw text.sym { font-family: "DejaVu Sans", sans-serif; }
.hw.k text { fill: #0b0b0b; }
.hw.b text { fill: #0c7dea; }
.hw.r text { fill: #c2101c; }
.st { fill: none; stroke-width: 2.200; stroke-linecap: round; stroke-linejoin: round; }
.st.k { stroke: #0b0b0b; }
.st.b { stroke: #0c7dea; }
.st.r { stroke: #c2101c; }
.floater { position: absolute; left: 1px; top: 641px; width: 53px; height: 53px; border-radius: 8px; background: #bdbdbd; display: flex; align-items: center; justify-content: center; }
.floater span { width: 24px; height: 24px; border-radius: 50%; background: radial-gradient(circle, #e9e9e9 0, #dcdcdc 55%, #c4c4c4 100%); }

/* side panel */
.side { width: 567px; height: 850px; background: #fff; display: flex; flex-direction: column; position: relative; }
.people { height: 326px; overflow: hidden; position: relative; }
.p-head, .c-head { display: flex; align-items: center; padding-left: 14px; }
.p-head { height: 60px; }
.c-head { height: 67px; }
.coll { color: #333; margin-right: 10px; }
.side h2 { margin: 0; font-size: 19.600px; font-weight: 600; color: #222; white-space: nowrap; }
.close { margin-left: auto; margin-right: 16px; color: #222; }
.search-row { display: flex; align-items: center; margin-top: 6px; padding-left: 27px; }
.search { width: 484px; height: 45px; border: 1.500px solid #cfcfcf; border-radius: 23px; display: flex; align-items: center; padding-left: 17px; gap: 11px; font-size: 19.500px; color: #666; }
.sort { margin-left: 19px; }
.row { height: 66px; display: flex; align-items: flex-start; padding-left: 26px; }
.search-row + .row { margin-top: 19px; }
.avatar { position: relative; width: 43px; height: 43px; border-radius: 50%; background: #ececec; display: flex; align-items: center; justify-content: center; font-size: 18px; color: #333; margin-right: 8px; }
.av-logo { position: absolute; right: -1px; bottom: -1px; }
.r-ic { margin-top: 9px; margin-right: 15px; color: #222; }
.r-txt { width: 150px; margin-top: -2px; }
.r-name { line-height: 26px; font-size: 20.300px; color: #222; white-space: nowrap; }
.r-role { line-height: 29px; padding-top: 1px; font-size: 17px; color: #777; }
.r-mic { margin-left: auto; margin-right: 37px; margin-top: 12px; color: #f2654f; }
.r-mic.low { margin-top: 14px; }
.cc { margin-top: 18px; }
.p-scroll { position: absolute; left: 555px; top: 123px; width: 7px; height: 28px; border-radius: 4px; background: #cfcfcf; }
.side-div { height: 2px; margin: 0 2px 0 3px; background: #dadada; }

.chat { flex: 1; display: flex; flex-direction: column; }
.c-log { height: 311px; display: flex; }
.msgs { flex: 1; padding: 1px 0 0 9px; }
.meta { height: 27.500px; line-height: 27.500px; font-size: 16.850px; color: #999; display: flex; gap: 20px; white-space: nowrap; }
.body { height: 27.500px; line-height: 27.500px; font-size: 19.900px; color: #222; white-space: nowrap; }
.track { width: 25px; margin-right: 2px; background: #f1f1f1; display: flex; flex-direction: column; align-items: center; }
.t-up { margin-top: 11px; }
.thumb { width: 100%; height: 26px; margin-top: auto; background: #cdcdcd; }
.t-dn { margin: 9px 0 9px; }
.to { display: flex; align-items: center; margin-top: 11px; padding-left: 18px; }
.to-l { width: 38px; font-size: 16.500px; color: #333; }
.select { width: 501px; height: 40px; border: 1.500px solid #cfcfcf; border-radius: 5px; display: flex; align-items: center; justify-content: space-between; padding: 2px 12px 0 10px; font-size: 17px; color: #666; }
.select svg { color: #555; margin-top: -2px; }
.enter { margin-top: 24px; padding-left: 30px; line-height: 26px; font-size: 19.600px; color: #666; }

/* bottom controls */
.controls { height: 89px; flex: none; display: flex; align-items: center; padding-left: 554px; gap: 12px; font-size: 22.600px; color: #222; }
.pill { height: 66px; border-radius: 33px; background: #fff; display: flex; align-items: center; }
.pill span { margin-top: 3px; }
.p-unmute { width: 189px; padding-left: 27px; }
.p-unmute span { margin-left: 14px; }
.p-video { width: 216px; padding-left: 23px; }
.p-video span { margin-left: 12px; }
.pchev { margin-left: auto; margin-right: 11px; color: #222; }
.p-share { width: 144px; padding-left: 20px; }
.p-share span { margin-left: 13px; }
.round { width: 66px; height: 66px; border-radius: 50%; background: #fff; display: flex; align-items: center; justify-content: center; }
.dots { font-size: 24px; font-weight: 600; }
.end { background: #d4381c; }
.pill-r { margin-left: auto; margin-right: 18px; height: 60px; width: 354px; border-radius: 30px; background: #fff; display: flex; font-size: 20.300px; color: #1179a6; }
.seg { display: flex; align-items: center; border-right: 2px solid #f0f0f0; }
.seg span { margin-top: 4px; }
.s-part { width: 179px; padding-left: 18px; gap: 12px; }
.s-part span { font-size: 19.400px; }
.s-chat { width: 116px; padding-left: 18px; gap: 12px; }
.s-more { flex: 1; border-right: 0; justify-content: center; color: #222; font-size: 24px; font-weight: 600; }

/* taskbar */
.taskbar { height: 49px; flex: none; display: flex; align-items: center; padding-left: 14px; position: relative; background: linear-gradient(90deg, #d6dfe7 0, #d3dde6 380px, #cbe3dc 445px, #d2dde4 520px, #d2dee2 720px, #d0d6d3 950px, #cfdcdc 1150px, #cde6ea 1400px, #d3e2e8 1560px, #dadde3 1700px, #e7dedf 1810px, #e2e4e6 1920px); }
.win { margin-right: 31px; }
.links { margin-left: 17px; font-size: 16.800px; color: #222; width: 583px; }
.apps { display: flex; height: 100%; margin-left: -1px; }
.app-cell { position: relative; width: 57px; height: 49px; display: flex; align-items: center; justify-content: center; }
.app-cell.open::after, .app-cell.active::after { content: ""; position: absolute; bottom: 2px; height: 3px; background: #00b3c0; }
.app-cell.open::after { left: 7px; right: 7px; }
.app-cell.active { background: #eef3f3; width: 56px; margin-left: 1px; }
.app-cell.active::after { left: 0; right: 0; }
.tray { margin-left: auto; display: flex; align-items: center; padding-right: 19px; position: relative; height: 100%; }
.tc-q { margin-right: 4px; }
.q-t { font-family: "Liberation Sans", sans-serif; font-weight: 700; font-size: 21px; fill: #fff; }
.i-t { font-family: "Liberation Sans", sans-serif; font-weight: 700; font-size: 13px; fill: #fff; }
.tc { width: 36px; display: flex; align-items: center; justify-content: center; }
.tc-eng { width: 55px; text-align: center; font-size: 15.500px; color: #222; }
.tc-clock { width: 62px; text-align: center; font-size: 17px; color: #222; }
.tc-note { width: 62px; display: flex; justify-content: center; }
.tb-edge { position: absolute; right: 7px; top: 0; bottom: 0; width: 1px; background: #9aa; }
```
